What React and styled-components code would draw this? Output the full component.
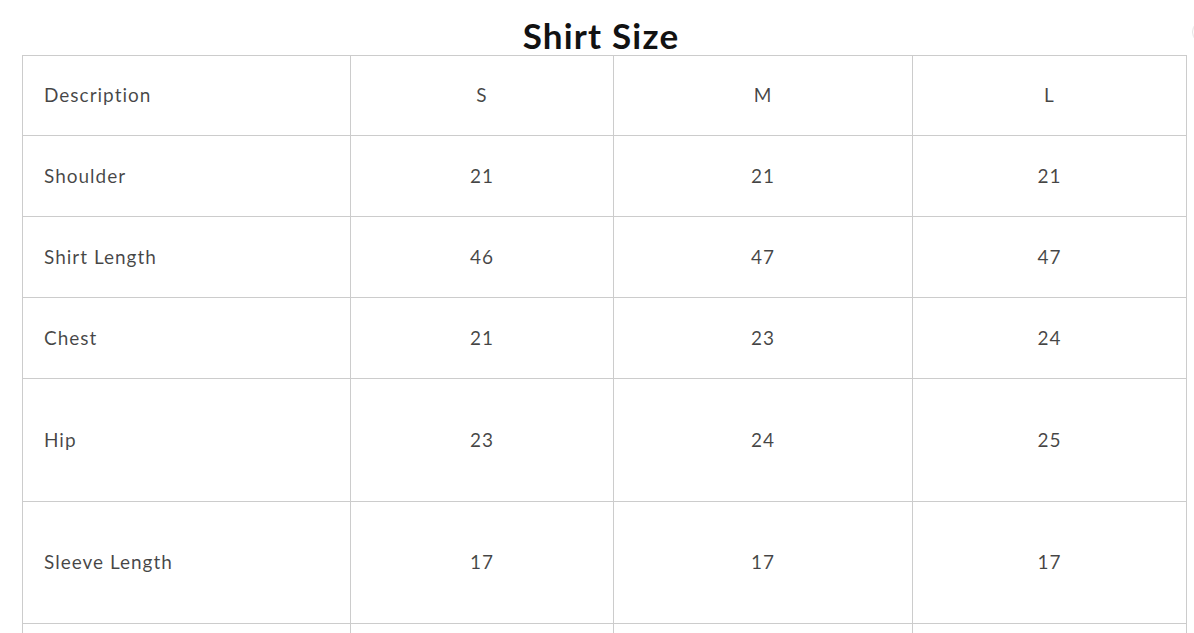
import React from 'react';
import styled, { createGlobalStyle } from 'styled-components';

const GlobalStyle = createGlobalStyle`
  html, body {
    margin: 0;
    padding: 0;
    background: #ffffff;
  }
  body {
    font-family: Lato, "Liberation Sans", sans-serif;
    overflow: hidden;
  }
`;

const columns = ['Description', 'S', 'M', 'L'];

const rows = [
  { label: 'Shoulder', values: [21, 21, 21], height: 81 },
  { label: 'Shirt Length', values: [46, 47, 47], height: 81 },
  { label: 'Chest', values: [21, 23, 24], height: 81 },
  { label: 'Hip', values: [23, 24, 25], height: 123 },
  { label: 'Sleeve Length', values: [17, 17, 17], height: 122 },
  { label: '', values: ['', '', ''], height: 60 },
];

const App = () => {
  return (
    <Page>
      <GlobalStyle />
      <Title>Shirt Size</Title>
      <CornerButton />
      <Table>
        <colgroup>
          <col style={{ width: 328 }} />
          <col style={{ width: 263 }} />
          <col style={{ width: 299 }} />
          <col style={{ width: 274 }} />
        </colgroup>
        <thead>
          <Row $height={80}>
            {columns.map((c, i) => (
              <Cell as="th" key={c} $first={i === 0}>{c}</Cell>
            ))}
          </Row>
        </thead>
        <tbody>
          {rows.map((r, idx) => (
            <Row key={idx} $height={r.height}>
              <Cell $first>{r.label}</Cell>
              {r.values.map((v, i) => (
                <Cell key={i}>{v}</Cell>
              ))}
            </Row>
          ))}
        </tbody>
      </Table>
    </Page>
  );
};

const Page = styled.div`
  position: relative;
  padding: 0 8px 0 22px;
  width: 1194px;
  box-sizing: border-box;
`;

const Title = styled.h2`
  margin: 0;
  padding-top: 18px;
  height: 55px;
  box-sizing: border-box;
  text-align: center;
  width: 1158px;
  font-family: Lato, "Liberation Sans", sans-serif;
  font-weight: 700;
  font-size: 35px;
  line-height: 1;
  color: #121212;
  letter-spacing: 1.2px;
`;

const CornerButton = styled.div`
  position: absolute;
  top: 20px;
  left: 1192px;
  width: 24px;
  height: 24px;
  border-radius: 50%;
  border: 1px solid #e4e4e4;
  box-sizing: border-box;
`;

const Table = styled.table`
  table-layout: fixed;
  border-collapse: collapse;
  width: 1164px;
  border-top: 1.5px solid #d6d6d6;
  border-left: 1.5px solid #d6d6d6;
  border-right: 1.5px solid #d6d6d6;
`;

const Row = styled.tr`
  height: ${(p) => p.$height}px;
`;

const Cell = styled.td`
  border: 1px solid #cccccc;
  padding: 0 0 2px ${(p) => (p.$first ? '21px' : '0')};
  text-align: ${(p) => (p.$first ? 'left' : 'center')};
  vertical-align: middle;
  font-family: Lato, "Liberation Sans", sans-serif;
  font-weight: 400;
  font-size: 19px;
  letter-spacing: 1px;
  color: rgba(18, 18, 18, 0.78);
  box-sizing: border-box;
`;

export default App;
